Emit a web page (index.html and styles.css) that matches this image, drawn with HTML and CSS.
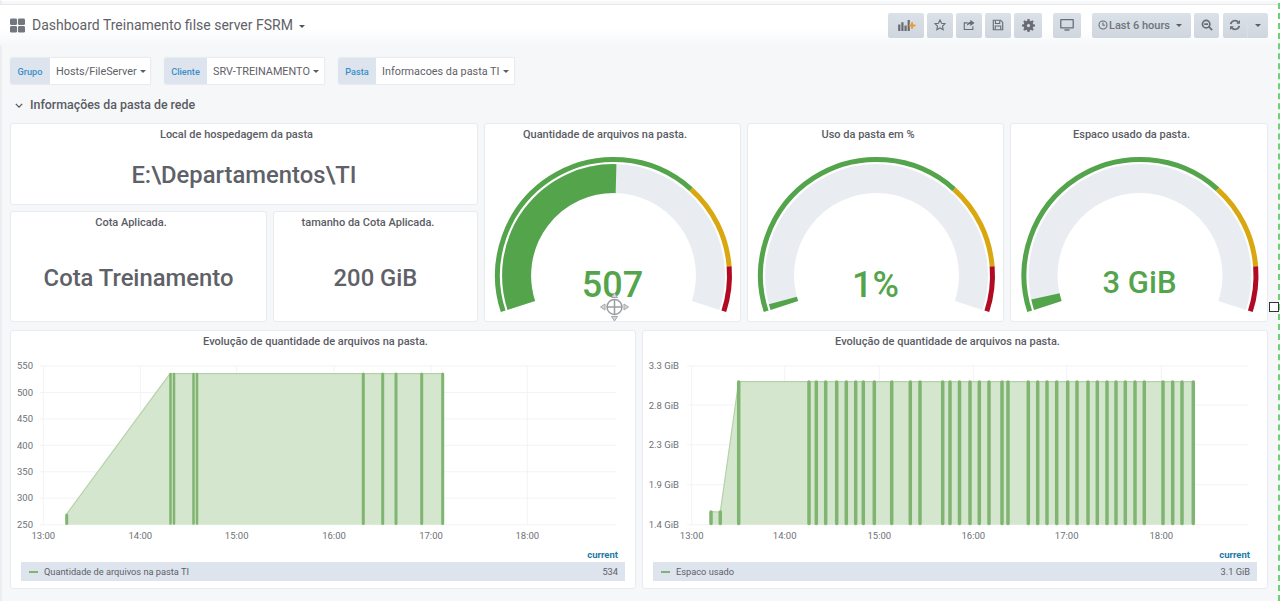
FILE: index.html
```html
<!DOCTYPE html>
<html lang="pt">
<head>
<meta charset="utf-8">
<title>Dashboard Treinamento filse server FSRM</title>
<link rel="stylesheet" href="styles.css">
</head>
<body>
<div class="page">
  <header class="nav">
    <svg class="nav-logo" viewBox="0 0 16 15"><rect x="0" y="0" width="7.500" height="7" rx="1.500"/><rect x="8.500" y="0" width="7.500" height="7" rx="1.500"/><rect x="0" y="8" width="7.500" height="7" rx="1.500"/><rect x="8.500" y="8" width="7.500" height="7" rx="1.500"/></svg>
    <h1 class="nav-title">Dashboard Treinamento filse server FSRM</h1>
    <span class="nav-caret"></span>
    <div class="toolbar">
      <button class="btn w-add"><svg viewBox="0 0 20 14" class="ic20"><path class="fill" d="M1 6h2.400v7H1zM4.400 3.500h2.400V13H4.400zM7.800 7h2.400v6H7.800zM11.200 1h2.400v12h-2.400z"/><path class="orange" d="M15 3.500h2v2.500h2.600v2H17v2.500h-2V8h-2.200V6H15z"/></svg></button>
      <button class="btn w-sq gap3"><svg viewBox="0 0 14 14" class="ic14"><path class="line" d="M7 1.200l1.800 3.800 4.100.5-3 2.800.8 4.100L7 10.400l-3.700 2 .8-4.100-3-2.800 4.100-.5z"/></svg></button>
      <button class="btn w-sq gap3"><svg viewBox="0 0 14 14" class="ic14"><path class="line" d="M11.500 8.500v3.700h-10V4.500h4"/><path class="fill" d="M8.600 1l4.900 3.600-4.900 3.600V6.200c-2 0-3.300.7-4.200 2.400.2-3 1.700-4.900 4.200-5.300z"/></svg></button>
      <button class="btn w-sq gap3"><svg viewBox="0 0 14 14" class="ic14"><path class="line" d="M1.500 1.500h8.500l2.500 2.500v8.500h-11z"/><path class="line" d="M4 1.700v3.500h5V1.700M3.800 12.300V8.200h6.400v4.100"/></svg></button>
      <button class="btn w-gear gap3"><svg viewBox="0 0 16 16" class="ic15"><path class="fill" d="M6.800 0h2.400l.4 2.200 1.400.6L12.800 1.500l1.700 1.700-1.300 1.800.6 1.400L16 6.800v2.400l-2.200.4-.6 1.400 1.300 1.800-1.700 1.700-1.800-1.300-1.400.6-.4 2.100H6.800l-.4-2.100-1.400-.6-1.800 1.300-1.700-1.700L2.800 11l-.6-1.400L0 9.200V6.800l2.200-.4.600-1.400L1.500 3.200l1.700-1.700L5 2.800l1.400-.6z"/><circle cx="8" cy="8" r="2" fill="#d5dce4"/></svg></button>
      <button class="btn w-gear gap11"><svg viewBox="0 0 16 14" class="ic16"><path class="fill" d="M1 0h14a1 1 0 0 1 1 1v9a1 1 0 0 1-1 1H1a1 1 0 0 1-1-1V1a1 1 0 0 1 1-1zm.5 1.500v8h13v-8z"/><path class="fill" d="M5 12h6v1.600H5z"/></svg></button>
      <button class="btn w-time gap11"><svg viewBox="0 0 12 12" class="ic10"><circle class="line" cx="6" cy="6" r="4.800"/><path class="line" d="M6 3v3.300h2.500"/></svg><span class="time-label">Last 6 hours</span><span class="caret"></span></button>
      <button class="btn w-zoom"><svg viewBox="0 0 14 14" class="ic13"><circle class="thick" cx="6" cy="6" r="4.300"/><path class="thick" d="M9 9l4 4M3.800 6h4.400"/></svg></button>
      <div class="btn-pair">
        <button class="btn w-ref"><svg viewBox="0 0 14 14" class="ic13"><path class="thick" d="M2 6a5 5 0 0 1 9-2M12 8a5 5 0 0 1-9 2"/><path class="fill" d="M12.800 1.200v4.400H8.400zM1.200 12.800V8.400h4.400z"/></svg></button>
        <button class="btn w-drop"><span class="caret"></span></button>
      </div>
    </div>
  </header>

  <section class="vars">
    <div class="var"><span class="var-label l-a">Grupo</span><span class="var-value w-a">Hosts/FileServer <i class="caret"></i></span></div>
    <div class="var"><span class="var-label l-b">Cliente</span><span class="var-value w-b">SRV-TREINAMENTO <i class="caret"></i></span></div>
    <div class="var"><span class="var-label l-c">Pasta</span><span class="var-value w-c">Informacoes da pasta TI <i class="caret"></i></span></div>
  </section>

  <div class="row-title"><svg viewBox="0 0 10 6" class="chev"><path d="M1 1l4 4 4-4"/></svg>Informações da pasta de rede</div>

  <main class="grid-top">
    <div class="grid-left">
      <article class="panel stat wide">
        <h2 class="panel-title">Local de hospedagem da pasta</h2>
        <div class="stat-value">E:\Departamentos\TI</div>
      </article>
      <article class="panel stat">
        <h2 class="panel-title">Cota Aplicada.</h2>
        <div class="stat-value">Cota Treinamento</div>
      </article>
      <article class="panel stat">
        <h2 class="panel-title">tamanho da Cota Aplicada.</h2>
        <div class="stat-value">200 GiB</div>
      </article>
    </div>

    <article class="panel">
      <h2 class="panel-title">Quantidade de arquivos na pasta.</h2>
      <svg class="gauge" viewBox="-128.500 -129.500 255 175">
        <path class="g-bg" d="M-92.16 29.94A96.900 96.900 0 1 1 92.16 29.94"/>
        <path class="g-fill" d="M-92.16 29.94A96.900 96.900 0 0 1 2.54 -96.87"/>
        <path class="g-t g-green" d="M-110.33 35.85A116 116 0 0 1 77.62 -86.2"/>
        <path class="g-t g-yellow" d="M77.62 -86.2A116 116 0 0 1 115.64 -9.1"/>
        <path class="g-t g-red" d="M115.64 -9.1A116 116 0 0 1 110.33 35.85"/>
        <text class="g-value" x="-1" y="21.500">507</text>
        <g class="move" transform="translate(1 31.500)">
          <circle cx="0" cy="0" r="7.500"/>
          <path d="M0-7.500V7.500M-7.500 0H7.500"/>
          <path class="move-arrow" d="M0-14l3 4.500h-6zM0 14l3-4.500h-6zM-14 0l4.500-3v6zM14 0l-4.500-3v6z"/>
        </g>
      </svg>
    </article>

    <article class="panel">
      <h2 class="panel-title">Uso da pasta em %</h2>
      <svg class="gauge" viewBox="-128.500 -129.500 255 175">
        <path class="g-bg" d="M-92.16 29.94A96.900 96.900 0 1 1 92.16 29.94"/>
        <path class="g-fill" d="M-92.16 29.94A96.900 96.900 0 0 1 -93.6 25.08"/>
        <path class="g-t g-green" d="M-110.33 35.85A116 116 0 0 1 77.62 -86.2"/>
        <path class="g-t g-yellow" d="M77.62 -86.2A116 116 0 0 1 115.64 -9.1"/>
        <path class="g-t g-red" d="M115.64 -9.1A116 116 0 0 1 110.33 35.85"/>
        <text class="g-value" x="-1" y="21.500">1%</text>
      </svg>
    </article>

    <article class="panel">
      <h2 class="panel-title">Espaco usado da pasta.</h2>
      <svg class="gauge" viewBox="-128.500 -129.500 255 175">
        <path class="g-bg" d="M-92.16 29.94A96.900 96.900 0 1 1 92.16 29.94"/>
        <path class="g-fill" d="M-92.16 29.94A96.900 96.900 0 0 1 -94.6 20.97"/>
        <path class="g-t g-green" d="M-110.33 35.85A116 116 0 0 1 77.62 -86.2"/>
        <path class="g-t g-yellow" d="M77.62 -86.2A116 116 0 0 1 115.64 -9.1"/>
        <path class="g-t g-red" d="M115.64 -9.1A116 116 0 0 1 110.33 35.85"/>
        <text class="g-value small" x="-0.500" y="17.500">3 GiB</text>
      </svg>
    </article>
  </main>

  <section class="grid-bottom">
    <article class="panel">
      <h2 class="panel-title">Evolução de quantidade de arquivos na pasta.</h2>
      <svg class="chart" viewBox="11 353 624 195">
        <path class="grid-line" d="M40 366H616M40 392.500H616M40 418.900H616M40 445.300H616M40 471.800H616M40 498.200H616M40 524.700H616M43.300 366V524.700M140.300 366V524.700M236.700 366V524.700M334 366V524.700M431 366V524.700M527.300 366V524.700"/>
        <path class="area" d="M66.700 524.700V514L170 373.700H443.500V524.700z"/>
        <path class="area-top" d="M66.700 514L170 373.700H443"/>
        <path class="bars thin" d="M170.500 374V523.500M174 374V523.500M193.500 374V523.500M197 374V523.500"/>
        <path class="bars" d="M66.700 515V523.500M363.300 374V523.500M382.700 374V523.500M396 374V523.500M421.700 374V523.500M442.700 374V523.500"/>
        <g class="axis">
          <text class="end" x="33" y="369">550</text><text class="end" x="33" y="395.500">500</text><text class="end" x="33" y="422">450</text><text class="end" x="33" y="448.500">400</text><text class="end" x="33" y="475">350</text><text class="end" x="33" y="501">300</text><text class="end" x="33" y="527.500">250</text>
          <text class="mid-a" x="43.300" y="538.500">13:00</text><text class="mid-a" x="140.300" y="538.500">14:00</text><text class="mid-a" x="236.700" y="538.500">15:00</text><text class="mid-a" x="334" y="538.500">16:00</text><text class="mid-a" x="431" y="538.500">17:00</text><text class="mid-a" x="527.300" y="538.500">18:00</text>
        </g>
      </svg>
      <div class="legend-head">current</div>
      <div class="legend"><span class="swatch"></span><span class="legend-name">Quantidade de arquivos na pasta TI</span><span class="legend-val">534</span></div>
    </article>

    <article class="panel">
      <h2 class="panel-title">Evolução de quantidade de arquivos na pasta.</h2>
      <svg class="chart" viewBox="643 353 624 195">
        <path class="grid-line" d="M687 366H1248.700M687 405H1248.700M687 444.700H1248.700M687 484.700H1248.700M687 524.700H1248.700M691.700 366V524.700M784.700 366V524.700M879.300 366V524.700M973.300 366V524.700M1066.700 366V524.700M1161.300 366V524.700"/>
        <path class="area" d="M711 524.700V511.700L720.300 512L738.700 381.700H1194V524.700z"/>
        <path class="area-top" d="M711 511.700L720.300 512L738.700 381.700H1193.300"/>
        <path class="bars wide-bars" d="M711 512V523.500M720.300 512V523.500M738.700 382V523.500M809 382V523.500M816.300 382V523.500M825.700 382V523.500M836.700 382V523.500M846.300 382V523.500M855.700 382V523.500M863.300 382V523.500M874.300 382V523.500M891.700 382V523.500M910.300 382V523.500M920 382V523.500M942.700 382V523.500M950 382V523.500M959.500 382V523.500M970 382V523.500M979.300 382V523.500M989 382V523.500M1002 382V523.500M1008 382V523.500M1028.300 382V523.500M1037.700 382V523.500M1047 382V523.500M1056.700 382V523.500M1067.700 382V523.500M1077 382V523.500M1088 382V523.500M1097.300 382V523.500M1107 382V523.500M1116 382V523.500M1125.300 382V523.500M1135 382V523.500M1144.300 382V523.500M1163 382V523.500M1172.700 382V523.500M1182 382V523.500M1193.300 382V523.500"/>
        <g class="axis">
          <text class="end" x="679" y="369">3.3 GiB</text><text class="end" x="679" y="408.500">2.8 GiB</text><text class="end" x="679" y="448">2.3 GiB</text><text class="end" x="679" y="488">1.9 GiB</text><text class="end" x="679" y="527.500">1.4 GiB</text>
          <text class="mid-a" x="691.700" y="538.500">13:00</text><text class="mid-a" x="784.700" y="538.500">14:00</text><text class="mid-a" x="879.300" y="538.500">15:00</text><text class="mid-a" x="973.300" y="538.500">16:00</text><text class="mid-a" x="1066.700" y="538.500">17:00</text><text class="mid-a" x="1161.300" y="538.500">18:00</text>
        </g>
      </svg>
      <div class="legend-head">current</div>
      <div class="legend"><span class="swatch"></span><span class="legend-name">Espaco usado</span><span class="legend-val">3.1 GiB</span></div>
    </article>
  </section>

  <div class="edge-dash"></div>
  <div class="handle"></div>
</div>
</body>
</html>
```

FILE: styles.css
```css
* { box-sizing: border-box; }
html, body { margin: 0; height: 601px; overflow: hidden; }
body { background: #f6f7f9; font-family: Roboto, "Liberation Sans", sans-serif; color: #52545c; }
.page { position: relative; height: 601px; padding-top: 3px; border-left: 2px solid #eceef1; border-top: 1px solid #fff; }

.nav { display: flex; align-items: center; height: 41px; margin-left: -2px; padding: 0 12px 0 10px; border-top: 1px solid #e6e8eb; background: linear-gradient(#fff 60%, #f6f7f9); }
.nav-logo { width: 15px; height: 15px; fill: #73767c; margin-right: 7px; }
.nav-title { margin: 0; font-size: 14px; font-weight: 400; color: #5f6168; }
.nav-caret { margin: 3px 0 0 6px; border: 3px solid transparent; border-top: 3px solid #52545c; border-bottom: 0; }
.toolbar { display: flex; margin-left: auto; }
.btn { display: flex; align-items: center; justify-content: center; height: 25px; padding: 0; border: 0; border-radius: 2px; background: linear-gradient(#dbe1e8, #cfd6de); font: inherit; color: #52545c; }
.gap3 { margin-left: 3px; }
.gap11 { margin-left: 11px; }
.w-add { width: 36px; }
.w-sq { width: 26px; }
.w-gear { width: 28px; }
.w-time { width: 99px; justify-content: flex-start; padding-left: 6px; }
.w-zoom { width: 25px; margin-left: 3px; }
.btn-pair { display: flex; margin-left: 4px; }
.w-ref { width: 24px; border-radius: 2px 0 0 2px; }
.w-drop { width: 21px; border-radius: 0 2px 2px 0; margin-left: 0; border-left: 1px solid #d9dfe6; }
.ic20 { width: 19px; height: 13px; }
.ic14 { width: 12px; height: 12px; }
.ic15 { width: 13px; height: 13px; }
.ic16 { width: 14px; height: 12px; }
.ic13 { width: 12px; height: 12px; }
.ic10 { width: 10px; height: 10px; margin-right: 1px; }
.fill { fill: #696c73; }
.orange { fill: #eb9a2d; }
.line { fill: none; stroke: #696c73; stroke-width: 1.300; }
.thick { fill: none; stroke: #696c73; stroke-width: 2; }
.time-label { font-size: 11px; font-weight: 500; color: #70737a; margin-right: 6px; white-space: nowrap; }
.caret { display: inline-block; border: 3px solid transparent; border-top: 3.500px solid #5c5e65; border-bottom: 0; vertical-align: 2px; }

.vars { display: flex; gap: 13px; margin: 12px 0 0 8px; }
.var { display: flex; height: 28px; border: 1px solid #e9ecf0; border-left: 0; background: #fff; border-radius: 2px; box-shadow: 0 0 1px #e4e7ec; }
.var-label { display: flex; align-items: center; justify-content: center; background: #dde4ed; color: #3b8fc8; font-size: 9.200px; font-weight: 500; border-radius: 2px 0 0 2px; }
.l-a { width: 40px; }
.l-b { width: 43px; }
.l-c { width: 38px; }
.var-value { display: flex; align-items: center; gap: 3px; padding-left: 6px; font-size: 10.850px; color: #5f6168; white-space: nowrap; }
.w-a { width: 100px; }
.w-b { width: 117px; }
.w-c { width: 138px; }

.row-title { display: flex; align-items: center; height: 20px; margin: 9px 0 9px 5px; font-size: 12.400px; font-weight: 500; color: #5a5c64; }
.chev { width: 8px; height: 5px; margin: 3px 7px 0 8px; fill: none; stroke: #52545c; stroke-width: 1.500; }

.panel { background: #fff; border: 1px solid #e8ebef; border-radius: 3px; min-width: 0; }
.panel-title { margin: 0; height: 22px; padding-right: 15px; line-height: 21px; text-align: center; font-size: 11px; font-weight: 500; color: #5a5c64; white-space: nowrap; }

.grid-top { display: grid; grid-template-columns: 468px 257px 257px 258px; gap: 6px; height: 199px; margin-left: 8px; }
.grid-left { display: grid; grid-template-columns: 257px 205px; grid-template-rows: 82px 111px; gap: 6px; }
.wide { grid-column: 1 / 3; }
.stat { display: flex; flex-direction: column; }
.stat-value { flex: 1; display: flex; align-items: center; justify-content: center; font-size: 23.800px; font-weight: 500; color: #5f6168; }

.gauge { display: block; width: 100%; height: 175px; overflow: visible; }
.g-bg, .g-fill { fill: none; stroke-width: 29; }
.g-bg { stroke: #e9edf2; }
.g-fill { stroke: #54a44c; }
.g-t { fill: none; stroke-width: 5; }
.g-green { stroke: #54a44c; }
.g-yellow { stroke: #d9a70f; }
.g-red { stroke: #b00b22; }
.g-value { text-anchor: middle; font-size: 36px; font-weight: 500; fill: #54a44c; font-family: Roboto, sans-serif; }
.g-value.small { font-size: 31px; }
.move { fill: none; stroke: #9a9da2; stroke-width: 1.500; }
.move-arrow { fill: #d5d7da; stroke: #a5a7ac; stroke-width: 1; }

.grid-bottom { display: grid; grid-template-columns: 626px 626px; gap: 6px; height: 259px; margin: 8px 0 0 8px; }
.chart { display: block; width: 624px; height: 195px; }
.grid-line { fill: none; stroke: #f2f3f5; stroke-width: 1; }
.area { fill: #d5e6cf; }
.area-top { fill: none; stroke: #b4d2a8; stroke-width: 1.200; }
.bars { fill: none; stroke: #7fb570; stroke-width: 3; stroke-linecap: round; }
.bars.thin { stroke-width: 2.500; }
.bars.wide-bars { stroke-width: 3.500; }
.axis { font-size: 9.500px; fill: #6e7178; font-family: Roboto, sans-serif; }
.end { text-anchor: end; }
.mid-a { text-anchor: middle; }
.legend-head { height: 14px; padding-right: 17px; text-align: right; font-size: 9.500px; font-weight: 700; line-height: 13px; color: #1e7ba6; }
.legend { display: flex; align-items: center; height: 19px; margin: 0 10px; padding: 0 7px 0 8px; background: #dde4ed; font-size: 9.250px; color: #5f6168; }
.swatch { width: 9px; height: 2px; margin-right: 6px; background: #7fb570; }
.legend-val { margin-left: auto; }

.edge-dash { position: absolute; top: 2px; right: 0; bottom: 0; border-right: 2px dashed #6fd076; }
.handle { position: absolute; top: 301px; left: 1267px; width: 10px; height: 10px; background: #fff; border: 1px solid #333; }
```
